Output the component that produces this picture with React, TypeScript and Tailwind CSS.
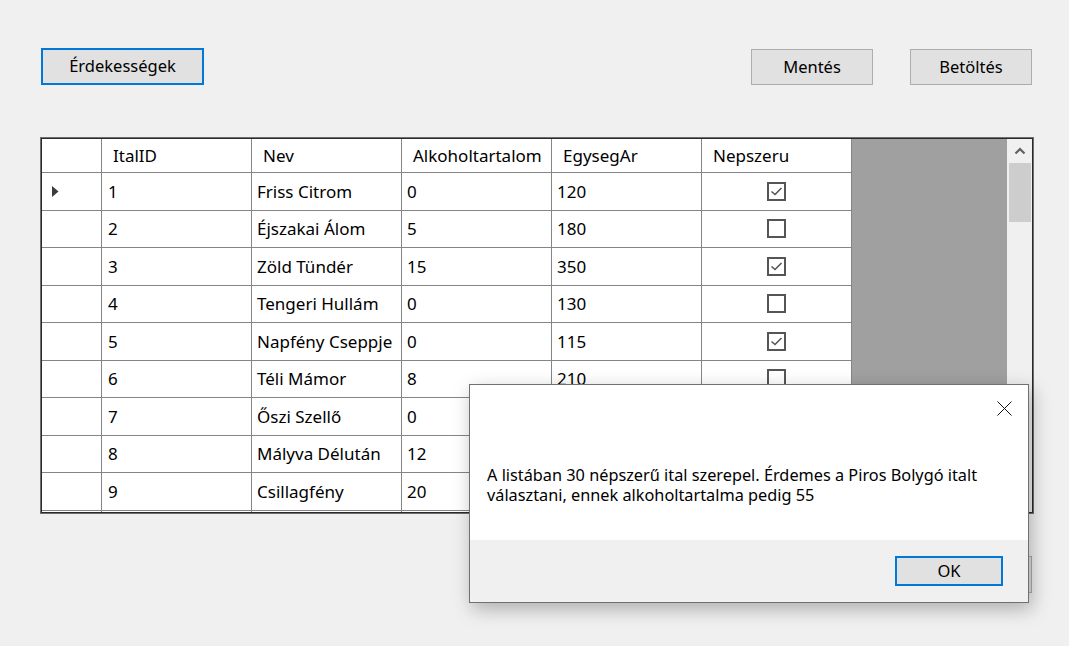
import type { ReactNode } from 'react';

interface Ital {
    id: number;
    nev: string;
    alkohol: number;
    ar: number;
    nepszeru: boolean;
}

const italok: Ital[] = [
    { id: 1, nev: 'Friss Citrom', alkohol: 0, ar: 120, nepszeru: true },
    { id: 2, nev: 'Éjszakai Álom', alkohol: 5, ar: 180, nepszeru: false },
    { id: 3, nev: 'Zöld Tündér', alkohol: 15, ar: 350, nepszeru: true },
    { id: 4, nev: 'Tengeri Hullám', alkohol: 0, ar: 130, nepszeru: false },
    { id: 5, nev: 'Napfény Cseppje', alkohol: 0, ar: 115, nepszeru: true },
    { id: 6, nev: 'Téli Mámor', alkohol: 8, ar: 210, nepszeru: false },
    { id: 7, nev: 'Őszi Szellő', alkohol: 0, ar: 140, nepszeru: true },
    { id: 8, nev: 'Mályva Délután', alkohol: 12, ar: 260, nepszeru: false },
    { id: 9, nev: 'Csillagfény', alkohol: 20, ar: 310, nepszeru: true },
];

const columns = ['ItalID', 'Nev', 'Alkoholtartalom', 'EgysegAr', 'Nepszeru'];

// WinForms style push button
const WinButton = ({ children, focused, className }: { children: ReactNode; focused?: boolean; className?: string }) => (
    <button
        className={
            'flex items-center justify-center bg-[#e1e1e1] text-[16.5px] text-black ' +
            (focused ? 'border-2 border-[#0078d7] ' : 'border border-[#adadad] ') +
            (className ?? '')
        }
    >
        {children}
    </button>
);

const CheckBox = ({ checked }: { checked: boolean }) => (
    <div className="w-[19px] h-[19px] border-2 border-[#555555] bg-white flex items-center justify-center">
        {checked && (
            <svg width="13" height="11" viewBox="0 0 13 11">
                <path d="M1.5 5.5 L5 8.5 L11.5 2" fill="none" stroke="#555555" strokeWidth="1.6" />
            </svg>
        )}
    </div>
);

const GridRow = ({ it, current }: { it?: Ital; current?: boolean }) => (
    <div className="flex h-[37.5px] shrink-0 border-b border-[#858585]">
        <div className="w-[60px] border-r border-[#858585] flex items-center pl-[10px]">
            {current && (
                <svg width="7" height="11" viewBox="0 0 7 11">
                    <path d="M0 0 L6.5 5.5 L0 11 Z" fill="#3c3c3c" />
                </svg>
            )}
        </div>
        <div className="w-[150px] border-r border-[#858585] pl-[6px] flex items-center">{it?.id}</div>
        <div className="w-[150px] border-r border-[#858585] pl-[5px] flex items-center whitespace-nowrap">{it?.nev}</div>
        <div className="w-[150px] border-r border-[#858585] pl-[5px] flex items-center">{it?.alkohol}</div>
        <div className="w-[150px] border-r border-[#858585] pl-[5px] flex items-center">{it?.ar}</div>
        <div className="w-[150px] border-r border-[#858585] flex items-center justify-center">
            {it && <CheckBox checked={it.nepszeru} />}
        </div>
    </div>
);

const DataGrid = () => (
    <div className="h-[377px] border border-[#6e6e6e]">
        <div className="h-full border border-[#2a2a2a] flex bg-[#a0a0a0] overflow-hidden">
            <div className="flex flex-col w-[810px] shrink-0 bg-white text-[17px]">
                {/* header */}
                <div className="flex h-[34px] shrink-0 border-b border-[#858585]">
                    <div className="w-[60px] border-r border-[#858585]" />
                    {columns.map((c) => (
                        <div key={c} className="w-[150px] border-r border-[#858585] pl-[11px] flex items-center whitespace-nowrap">
                            {c}
                        </div>
                    ))}
                </div>
                {italok.map((it, i) => (
                    <GridRow key={it.id} it={it} current={i === 0} />
                ))}
                <GridRow />
            </div>
            <div className="flex-1" />
            {/* vertical scrollbar */}
            <div className="w-[25px] shrink-0 bg-[#f0f0f0] flex flex-col items-center">
                <div className="h-[24px] w-full flex items-center justify-center">
                    <svg width="12" height="8" viewBox="0 0 12 8">
                        <path d="M1.5 6.5 L6 2 L10.5 6.5" fill="none" stroke="#606060" strokeWidth="2.2" />
                    </svg>
                </div>
                <div className="w-[22px] h-[59px] bg-[#cdcdcd]" />
            </div>
        </div>
    </div>
);

const MessageBox = () => (
    <div className="absolute left-[469px] top-[384px] w-[560px] h-[219px] border border-[#707070] bg-white flex flex-col shadow-[3px_6px_18px_rgba(0,0,0,0.28)]">
        <div className="flex-1 relative">
            <svg className="absolute right-[16px] top-[16px]" width="15" height="15" viewBox="0 0 15 15">
                <path d="M0.5 0.5 L14.5 14.5 M14.5 0.5 L0.5 14.5" stroke="#111" strokeWidth="1" />
            </svg>
            <p className="absolute left-[17px] top-[80px] w-[530px] text-[16.3px] leading-[20px] text-black">
                A listában 30 népszerű ital szerepel. Érdemes a Piros Bolygó italt választani, ennek alkoholtartalma pedig 55
            </p>
        </div>
        <div className="h-[62px] bg-[#f0f0f0] flex justify-end pt-[16px] pr-[25px]">
            <WinButton focused className="w-[108px] h-[30px]">OK</WinButton>
        </div>
    </div>
);

export default function App() {
    return (
        <div
            className="relative w-[1069px] h-[646px] bg-[#f0f0f0] pl-[40px] pr-[35px] pt-[48px] text-[15px] text-black overflow-hidden"
            style={{ fontFamily: '"Noto Sans", "Open Sans", sans-serif' }}
        >
            <div className="flex justify-between items-start h-[37px]">
                <WinButton focused className="ml-[1px] w-[163px] h-[37px]">Érdekességek</WinButton>
                <div className="flex gap-[37px] mr-[2px] mt-[1px]">
                    <WinButton className="w-[122px] h-[36px]">Mentés</WinButton>
                    <WinButton className="w-[122px] h-[36px]">Betöltés</WinButton>
                </div>
            </div>
            <div className="mt-[52px]">
                <DataGrid />
            </div>
            <div className="flex justify-end mt-[42px] mr-[2px]">
                <WinButton className="w-[122px] h-[37px]">Kilépés</WinButton>
            </div>
            <MessageBox />
        </div>
    );
}
